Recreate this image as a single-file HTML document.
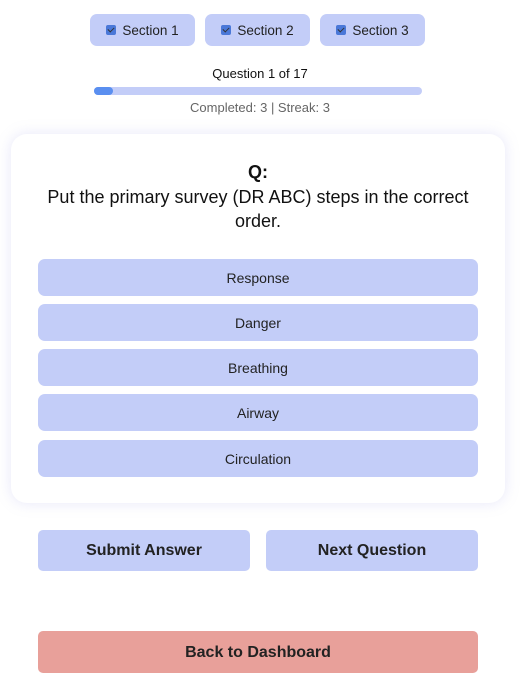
<!DOCTYPE html>
<html><head><style>
body{margin:0;width:520px;height:690px;background:#fff;font-family:"Liberation Sans",sans-serif;position:relative;overflow:hidden}
.sec{position:absolute;top:14px;height:32px;width:105px;background:#c3cdf8;border-radius:7px;font-size:13.5px;color:#222;display:flex;align-items:center;justify-content:center;gap:6px}
.cb{width:10px;height:10px;background:#4a78d8;border-radius:2px;display:inline-block;position:relative}
.cb:after{content:"";position:absolute;left:3px;top:1px;width:3px;height:5px;border:solid #333;border-width:0 1.5px 1.5px 0;transform:rotate(45deg)}
.t{position:absolute;left:0;width:520px;text-align:center}
.card{position:absolute;left:11px;top:134px;width:494px;height:369px;background:#fff;border-radius:16px;box-shadow:0 0 14px rgba(160,160,230,.25)}
.opt{position:absolute;left:27px;width:440px;height:37px;background:#c3cdf8;border-radius:7px;font-size:14px;color:#222;display:flex;align-items:center;justify-content:center}
.btn{position:absolute;height:41px;background:#c3cdf8;border-radius:5px;font-weight:bold;font-size:16px;color:#222;display:flex;align-items:center;justify-content:center}
</style></head><body>
<div class="sec" style="left:90px"><span class="cb"></span>Section 1</div>
<div class="sec" style="left:205px"><span class="cb"></span>Section 2</div>
<div class="sec" style="left:320px"><span class="cb"></span>Section 3</div>
<div class="t" style="top:66px;font-size:13px;color:#111">Question 1 of 17</div>
<div style="position:absolute;left:94px;top:87px;width:328px;height:8px;background:#c3cdf8;border-radius:4px"><div style="width:19px;height:8px;background:#5a8ff0;border-radius:4px"></div></div>
<div class="t" style="top:100px;font-size:13px;color:#666">Completed: 3 | Streak: 3</div>
<div class="card">
<div style="position:absolute;left:0;width:494px;top:28px;text-align:center;font-weight:bold;font-size:18px;color:#111">Q:</div>
<div style="position:absolute;left:20px;width:454px;top:51px;text-align:center;font-size:18px;line-height:24px;color:#111">Put the primary survey (DR ABC) steps in the correct order.</div>
<div class="opt" style="top:125px">Response</div>
<div class="opt" style="top:170px">Danger</div>
<div class="opt" style="top:215px">Breathing</div>
<div class="opt" style="top:260px">Airway</div>
<div class="opt" style="top:306px">Circulation</div>
</div>
<div class="btn" style="left:38px;top:530px;width:212px">Submit Answer</div>
<div class="btn" style="left:266px;top:530px;width:212px">Next Question</div>
<div class="btn" style="left:38px;top:631px;width:440px;height:42px;background:#e8a09a;padding-top:2px;box-sizing:border-box">Back to Dashboard</div>
</body></html>
